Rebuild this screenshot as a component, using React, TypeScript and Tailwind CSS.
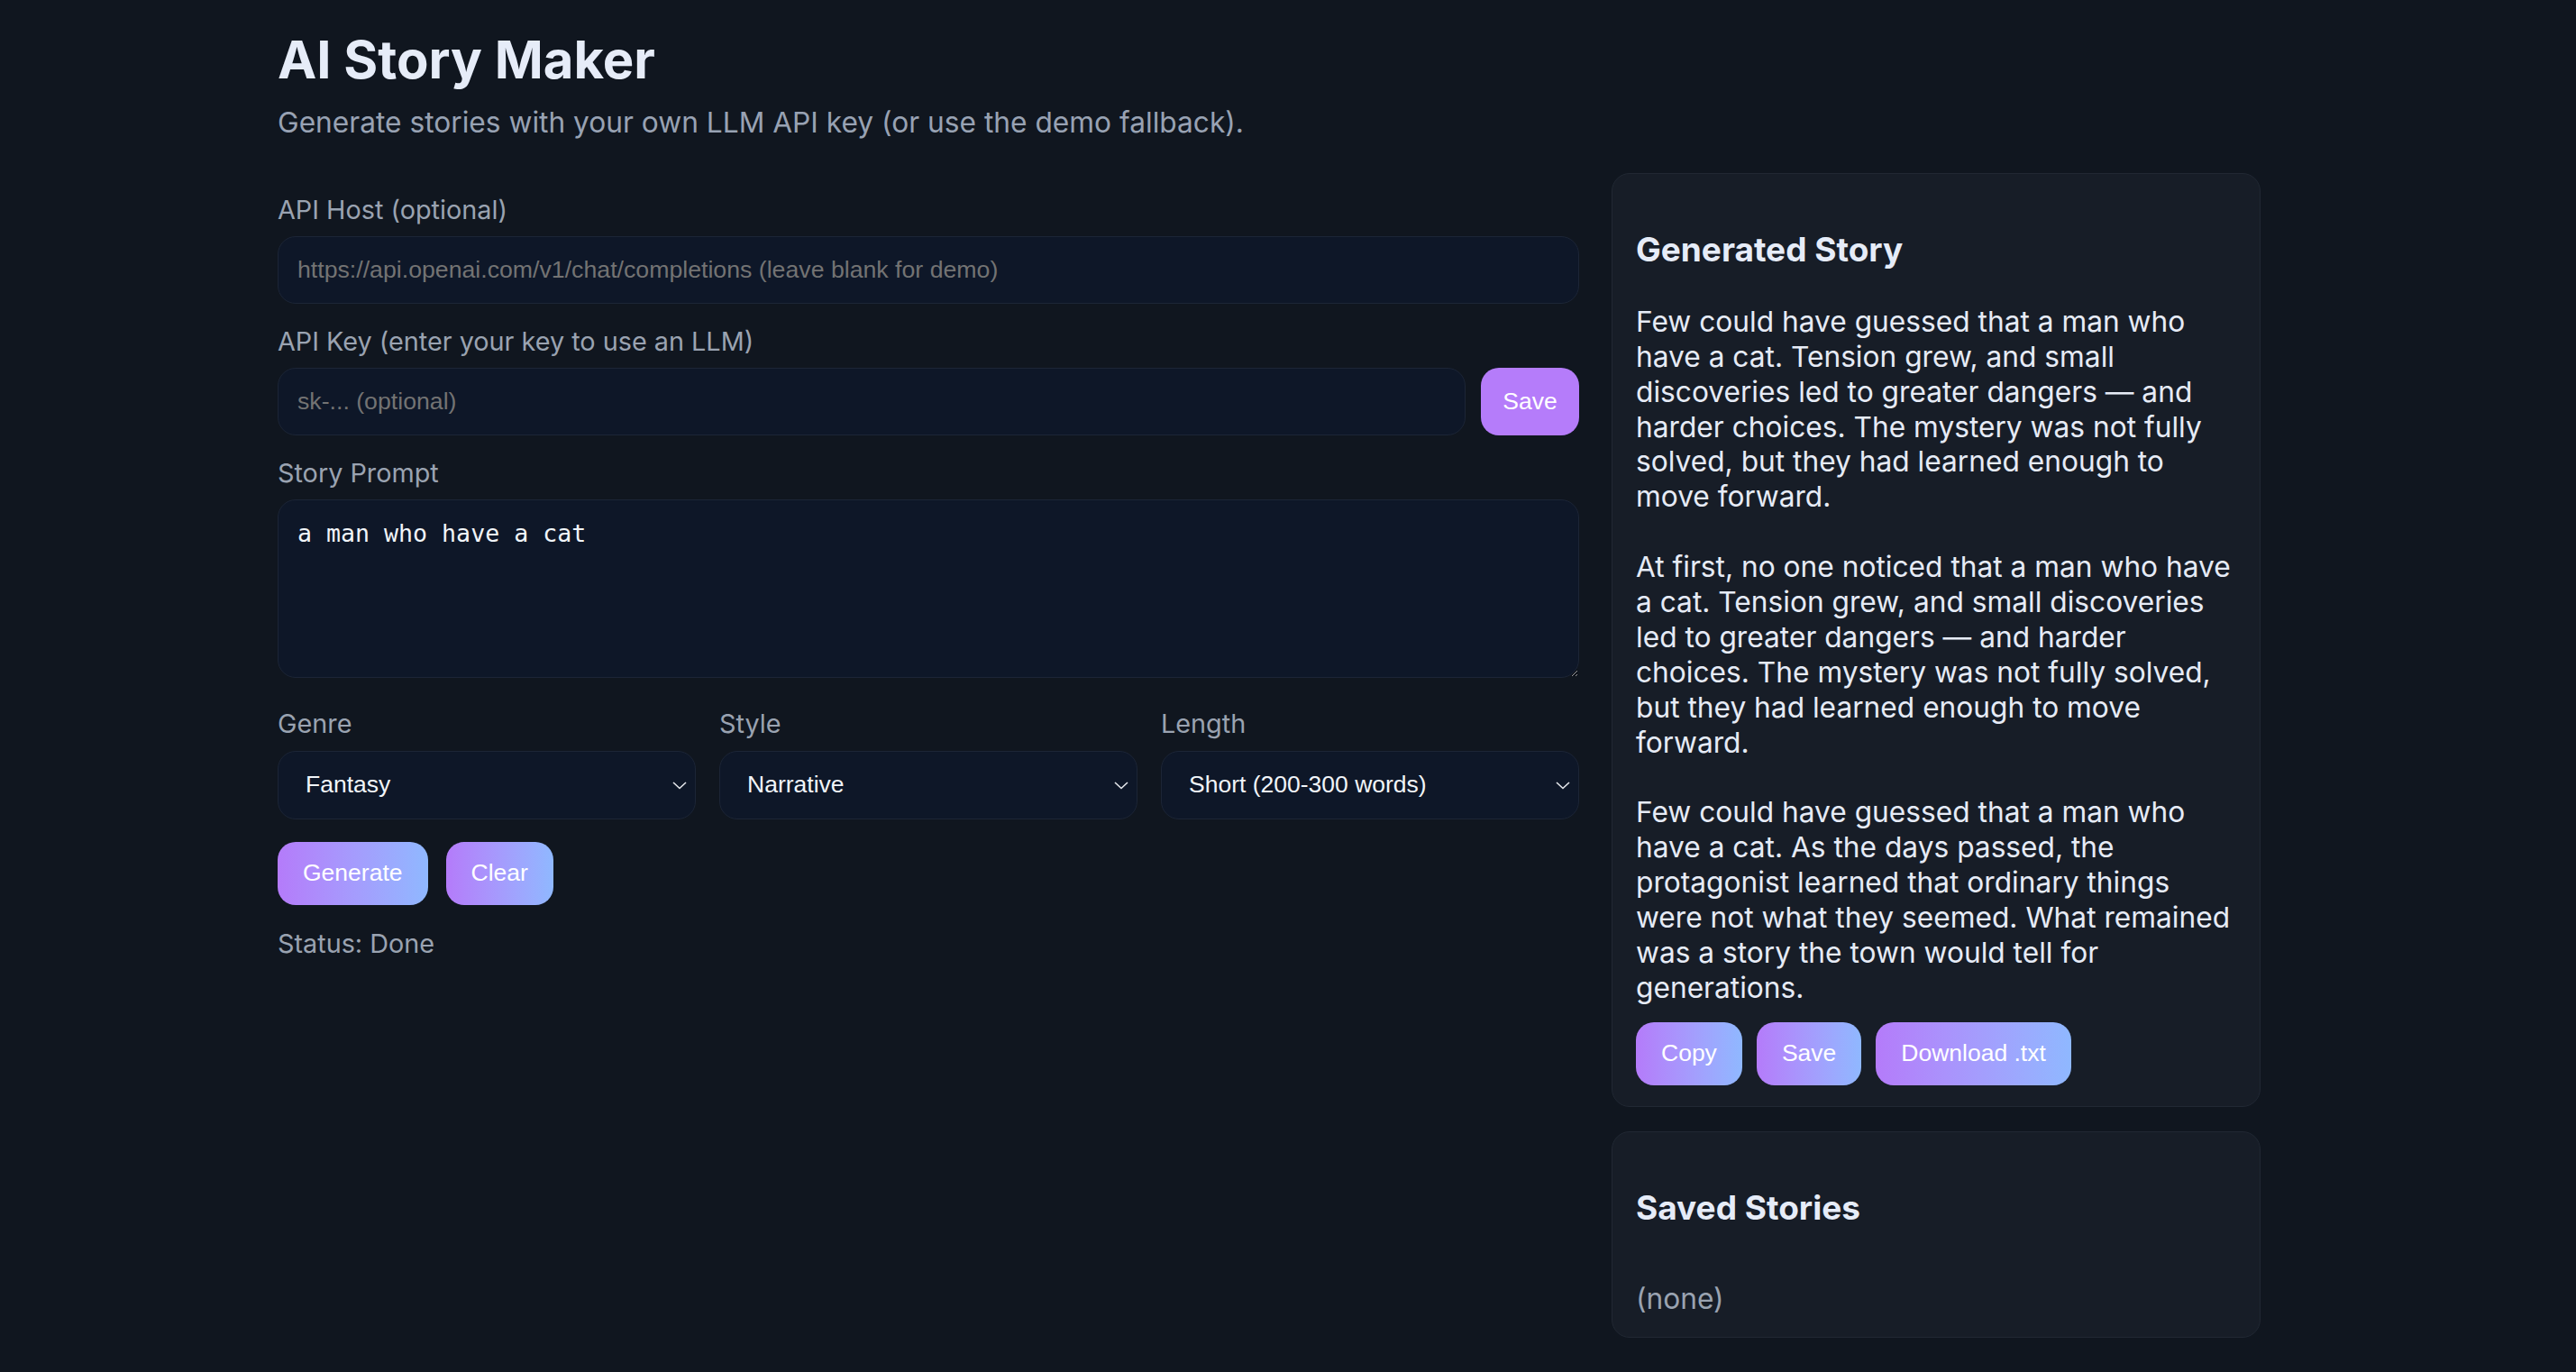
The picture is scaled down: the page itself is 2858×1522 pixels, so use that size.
import React from "react";

const STORY = `Few could have guessed that a man who have a cat. Tension grew, and small discoveries led to greater dangers — and harder choices. The mystery was not fully solved, but they had learned enough to move forward.

At first, no one noticed that a man who have a cat. Tension grew, and small discoveries led to greater dangers — and harder choices. The mystery was not fully solved, but they had learned enough to move forward.

Few could have guessed that a man who have a cat. As the days passed, the protagonist learned that ordinary things were not what they seemed. What remained was a story the town would tell for generations.`;

function Chevron() {
  return (
    <svg
      className="pointer-events-none absolute right-[9px] top-1/2 -translate-y-1/2"
      width="18"
      height="12"
      viewBox="0 0 18 12"
      fill="none"
    >
      <path d="M2 3 L9 9.5 L16 3" stroke="#e5e7eb" strokeWidth="1.6" />
    </svg>
  );
}

function Select({ value }: { value: string }) {
  return (
    <div className="relative">
      <select
        defaultValue={value}
        className="h-[76px] w-full appearance-none rounded-[20px] border border-[#1c2536] bg-[#0e1728] pl-[30px] pr-[40px] font-['Liberation_Sans',Arial,sans-serif] text-[26.5px] text-[#f1f5f9] outline-none"
      >
        <option>{value}</option>
      </select>
      <Chevron />
    </div>
  );
}

const gradBtn =
  "h-[70px] rounded-[20px] bg-gradient-to-r from-[#b47bfa] to-[#8fb8ff] px-[28px] font-['Liberation_Sans',Arial,sans-serif] text-[26.5px] text-white";

const labelCls = "text-[28.8px] leading-[35px] text-[#9aa3b1]";

export default function App() {
  return (
    <div className="min-h-screen bg-[#10161f] font-['Inter',sans-serif] text-[#e5ebf6]">
      <div className="ml-[308px] w-[2200px] pt-[31px] pb-[38px]">
        <h1 className="text-[58px] font-bold leading-[70px] text-[#e6ecf8]">AI Story Maker</h1>
        <p className="mt-[15px] text-[31.7px] leading-[39px] text-[#98a2b3]">
          Generate stories with your own LLM API key (or use the demo fallback).
        </p>

        <div className="mt-[37px] flex gap-[36px]">
          {/* Left column */}
          <div className="flex w-[1444px] flex-col pt-[23px]">
            <label className={labelCls}>API Host (optional)</label>
            <input
              placeholder="https://api.openai.com/v1/chat/completions (leave blank for demo)"
              className="mt-[12px] h-[75px] w-full rounded-[20px] border border-[#1c2536] bg-[#0e1728] px-[21px] font-['Liberation_Sans',Arial,sans-serif] text-[26.7px] text-[#f1f5f9] outline-none placeholder:text-[#737373]"
            />

            <label className={"mt-[24px] " + labelCls}>API Key (enter your key to use an LLM)</label>
            <div className="mt-[12px] flex gap-[17px]">
              <input
                placeholder="sk-... (optional)"
                className="h-[75px] min-w-0 flex-1 rounded-[20px] border border-[#1c2536] bg-[#0e1728] px-[21px] font-['Liberation_Sans',Arial,sans-serif] text-[26.7px] text-[#f1f5f9] outline-none placeholder:text-[#737373]"
              />
              <button className="h-[75px] w-[109px] rounded-[20px] bg-[#b57cfa] font-['Liberation_Sans',Arial,sans-serif] text-[26.5px] text-white">
                Save
              </button>
            </div>

            <label className={"mt-[24px] " + labelCls}>Story Prompt</label>
            <textarea
              defaultValue="a man who have a cat"
              className="mt-[12px] h-[198px] w-full rounded-[20px] border border-[#1c2536] bg-[#0e1728] px-[21px] pt-[17px] pb-[21px] font-['DejaVu_Sans_Mono',monospace] text-[26.6px] text-[#f1f5f9] outline-none"
            />

            <div className="mt-[33px] grid grid-cols-3 gap-[26px]">
              <div className="flex flex-col">
                <span className={labelCls}>Genre</span>
                <div className="mt-[13px]">
                  <Select value="Fantasy" />
                </div>
              </div>
              <div className="flex flex-col">
                <span className={labelCls}>Style</span>
                <div className="mt-[13px]">
                  <Select value="Narrative" />
                </div>
              </div>
              <div className="flex flex-col">
                <span className={labelCls}>Length</span>
                <div className="mt-[13px]">
                  <Select value="Short (200-300 words)" />
                </div>
              </div>
            </div>

            <div className="mt-[25px] flex gap-[20px]">
              <button className={gradBtn}>Generate</button>
              <button className={gradBtn}>Clear</button>
            </div>

            <p className={"mt-[25px] " + labelCls}>Status: Done</p>
          </div>

          {/* Right column */}
          <div className="flex w-[720px] flex-col gap-[27px]">
            <section className="rounded-[20px] border border-[#212833] bg-[#171d27] pl-[26px] pr-[22px] pt-[62px] pb-[23px]">
              <h2 className="text-[37px] font-bold leading-[44.8px] text-[#e6ecf8]">Generated Story</h2>
              <div className="mt-[38px] whitespace-pre-wrap text-[31.7px] leading-[38.9px] text-[#e6ebf6]">{STORY}</div>
              <div className="mt-[18px] flex gap-[16px]">
                <button className={gradBtn}>Copy</button>
                <button className={gradBtn}>Save</button>
                <button className={gradBtn}>Download .txt</button>
              </div>
            </section>

            <section className="rounded-[20px] border border-[#212833] bg-[#171d27] pl-[26px] pr-[22px] pt-[62px] pb-[22px]">
              <h2 className="text-[37px] font-bold leading-[44.8px] text-[#e6ecf8]">Saved Stories</h2>
              <p className="mt-[59px] text-[31.7px] leading-[38.9px] text-[#9aa3b1]">(none)</p>
            </section>
          </div>
        </div>
      </div>
    </div>
  );
}
